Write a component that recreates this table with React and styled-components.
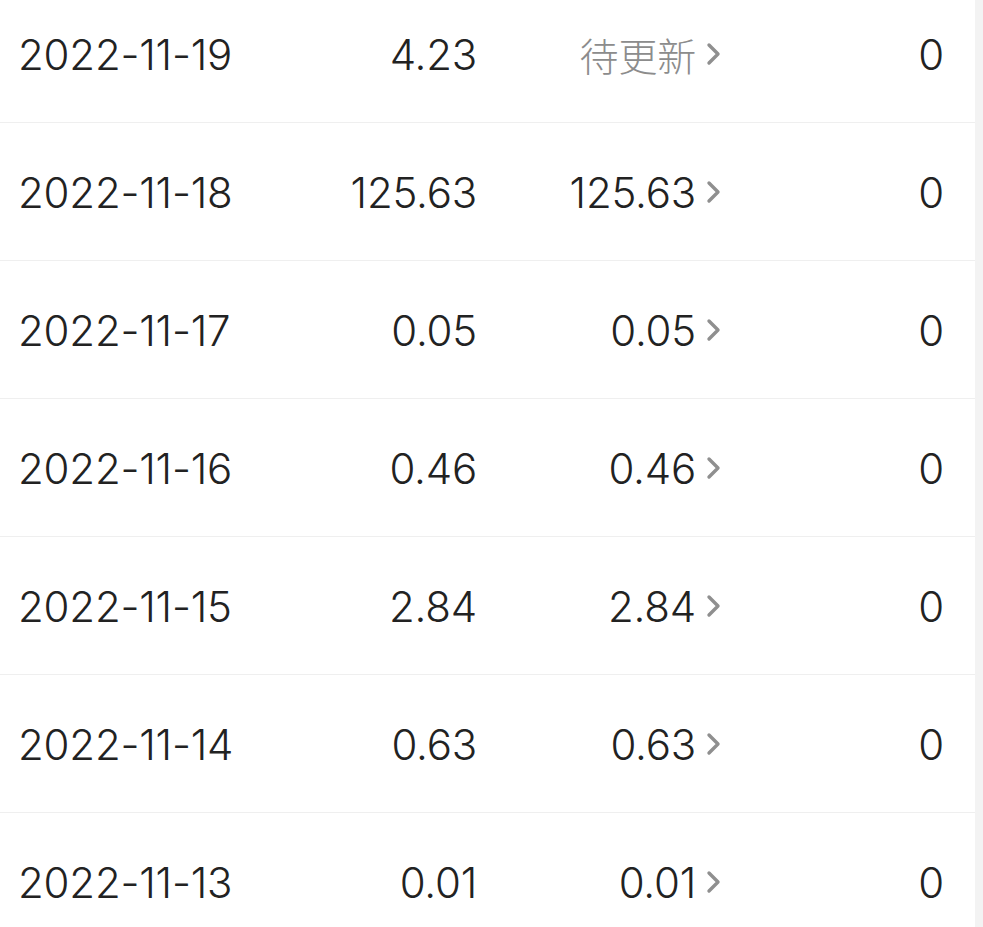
import React from 'react';
import styled, { createGlobalStyle } from 'styled-components';

const GlobalStyle = createGlobalStyle`
    html, body {
        margin: 0;
        padding: 0;
        background: #ffffff;
        overflow: hidden;
    }
    body {
        font-family: "Inter", "Noto Sans CJK SC", sans-serif;
        color: #222222;
    }
`

const Page = styled.div`
    display: flex;
    height: 927px;
    overflow: hidden;
`

const List = styled.div`
    width: 975px;
    margin-top: -15px;
`

// 오른쪽 회색 스크롤 영역
const Gutter = styled.div`
    width: 8px;
    background-color: #f3f3f3;
`

const Row = styled.div`
    box-sizing: border-box;
    display: grid;
    grid-template-columns: 242px 217px 245px 222px;
    align-items: center;
    height: 138px;
    padding: 1px 31px 0 18px;
    border-bottom: 1px solid #efefef;
    font-size: 42px;
    font-weight: 300;
    letter-spacing: -0.2px;
`

const DateCell = styled.div`
    text-align: left;
`

const NumCell = styled.div`
    text-align: right;
`

const LinkCell = styled.div`
    display: flex;
    align-items: center;
    justify-content: flex-end;
    gap: 10px;
    color: ${props => props.pending ? '#8c8c8c' : '#222222'};
    font-size: ${props => props.pending ? '39px' : '42px'};
`

const Chevron = () => (
    <svg width="16" height="26" viewBox="0 0 16 26">
        <polyline points="3,4 12,13 3,22" fill="none" stroke="#8f8f8f" strokeWidth="3.4" strokeLinecap="round" strokeLinejoin="round" />
    </svg>
)

const rows = [
    { date: '2022-11-19', amount: '4.23', settled: null, count: '0' },
    { date: '2022-11-18', amount: '125.63', settled: '125.63', count: '0' },
    { date: '2022-11-17', amount: '0.05', settled: '0.05', count: '0' },
    { date: '2022-11-16', amount: '0.46', settled: '0.46', count: '0' },
    { date: '2022-11-15', amount: '2.84', settled: '2.84', count: '0' },
    { date: '2022-11-14', amount: '0.63', settled: '0.63', count: '0' },
    { date: '2022-11-13', amount: '0.01', settled: '0.01', count: '0' },
];

const App = () => (
    <Page>
        <GlobalStyle />
        <List>
            {rows.map(row => (
                <Row key={row.date}>
                    <DateCell>{row.date}</DateCell>
                    <NumCell>{row.amount}</NumCell>
                    <LinkCell pending={!row.settled}>
                        <span>{row.settled ? row.settled : '待更新'}</span>
                        <Chevron />
                    </LinkCell>
                    <NumCell>{row.count}</NumCell>
                </Row>
            ))}
        </List>
        <Gutter />
    </Page>
);

export default App;
